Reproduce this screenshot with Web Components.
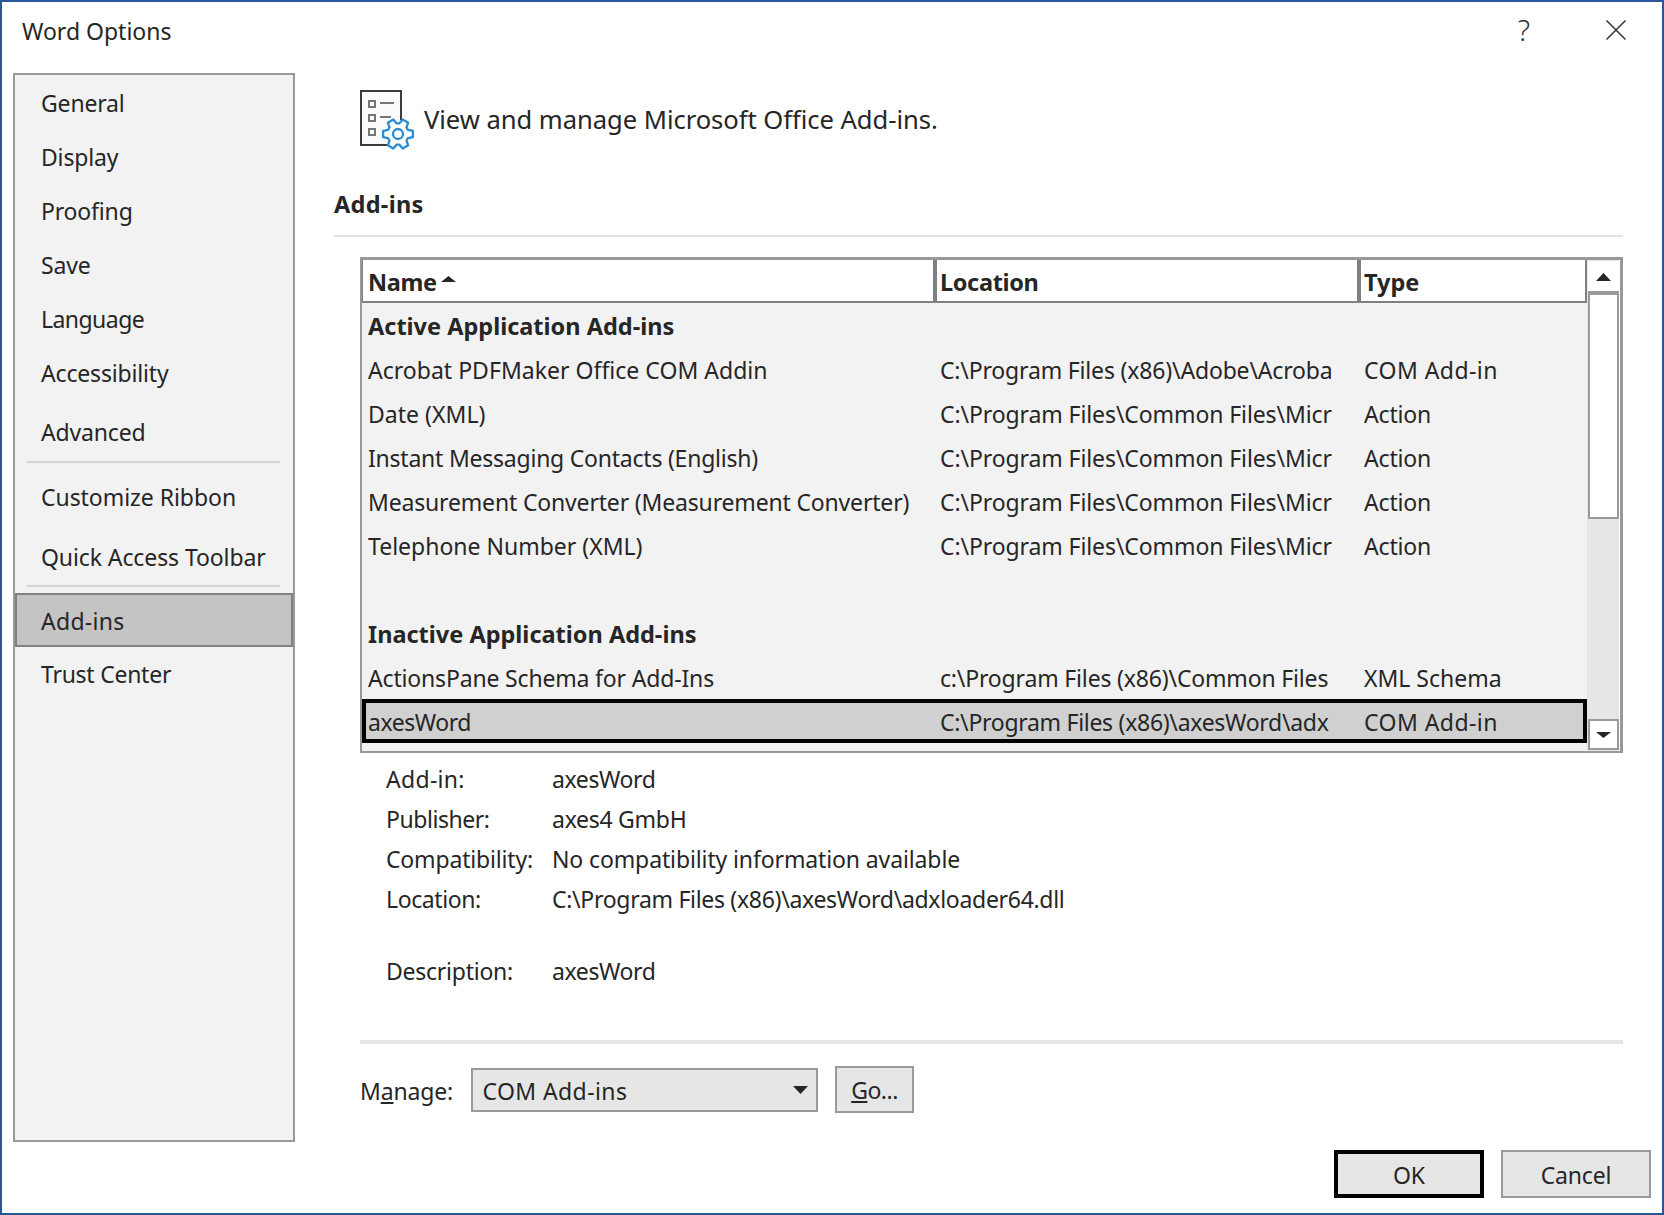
<!DOCTYPE html>
<html lang="en"><head><meta charset="utf-8"><title>Word Options</title>
<style>
html,body{margin:0;padding:0;background:#fff}
body{font-family:"Noto Sans","Open Sans",sans-serif;font-size:23px;color:#262626;letter-spacing:-.17px}
</style></head><body>
<word-options>
  <span slot="title" style="letter-spacing:0">Word Options</span>
  <side-nav slot="nav">
    <nav-item>General</nav-item><nav-item>Display</nav-item><nav-item>Proofing</nav-item><nav-item>Save</nav-item><nav-item style="letter-spacing:-.55px">Language</nav-item><nav-item>Accessibility</nav-item>
    <nav-item style="margin-top:5px">Advanced</nav-item>
    <nav-sep style="margin-top:1px"></nav-sep>
    <nav-item style="margin-top:8px;letter-spacing:-.05px">Customize Ribbon</nav-item><nav-item style="margin-top:6px;letter-spacing:-.1px">Quick Access Toolbar</nav-item>
    <nav-sep></nav-sep>
    <nav-item selected style="letter-spacing:.28px">Add-ins</nav-item><nav-item style="margin-top:1px;letter-spacing:-.25px">Trust Center</nav-item>
  </side-nav>
  <addins-pane slot="main">
    <addin-table>
      <addin-group>Active Application Add-ins</addin-group>
      <addin-row nls=".02" tls=".45" name="Acrobat PDFMaker Office COM Addin" loc="C:\Program Files (x86)\Adobe\Acroba" type="COM Add-in"></addin-row>
      <addin-row nls=".03" lls="-.1" name="Date (XML)" loc="C:\Program Files\Common Files\Micr" type="Action"></addin-row>
      <addin-row nls="-.23" lls="-.1" name="Instant Messaging Contacts (English)" loc="C:\Program Files\Common Files\Micr" type="Action"></addin-row>
      <addin-row lls="-.1" name="Measurement Converter (Measurement Converter)" loc="C:\Program Files\Common Files\Micr" type="Action"></addin-row>
      <addin-row nls="0" lls="-.1" name="Telephone Number (XML)" loc="C:\Program Files\Common Files\Micr" type="Action"></addin-row>
      <addin-group></addin-group>
      <addin-group>Inactive Application Add-ins</addin-group>
      <addin-row tls="0" name="ActionsPane Schema for Add-Ins" loc="c:\Program Files (x86)\Common Files" type="XML Schema"></addin-row>
      <addin-row selected nls="-.45" lls="-.29" tls=".45" name="axesWord" loc="C:\Program Files (x86)\axesWord\adx" type="COM Add-in"></addin-row>
    </addin-table>
    <detail-row label="Add-in:" lls=".3"><span style="letter-spacing:-.4px">axesWord</span></detail-row>
    <detail-row label="Publisher:" lls="-.45"><span style="letter-spacing:-.27px">axes4 GmbH</span></detail-row>
    <detail-row label="Compatibility:"><span style="letter-spacing:-.12px">No compatibility information available</span></detail-row>
    <detail-row label="Location:" lls="-.4"><span style="letter-spacing:-.3px">C:\Program Files (x86)\axesWord\adxloader64.dll</span></detail-row>
    <detail-row label="Description:" lls="-.25" spaced><span style="letter-spacing:-.4px">axesWord</span></detail-row>
  </addins-pane>
  <dlg-button slot="footer" default>OK</dlg-button>
  <dlg-button slot="footer">Cancel</dlg-button>
</word-options>
<script>
function def(name, css, html){
  customElements.define(name, class extends HTMLElement{
    constructor(){super();this.attachShadow({mode:'open'}).innerHTML='<style>'+css+'</style>'+(typeof html==='function'?html(this):html);}
  });
}
const tri=(w,h,up,fill='#262626')=>`<svg width="${w}" height="${h}" viewBox="0 0 ${w} ${h}" style="display:block"><polygon points="${up?`0,${h} ${w},${h} ${w/2},0`:`0,0 ${w},0 ${w/2},${h}`}" fill="${fill}"/></svg>`;
function gearPath(cx,cy,ro,ri){
  let d='';
  for(let i=0;i<6;i++){
    const a=i*60;
    const pts=[[ri,a-22],[ro,a-12],[ro,a+12],[ri,a+22]];
    pts.forEach((p,j)=>{
      const r=p[1]*Math.PI/180;
      d+=((i===0&&j===0)?'M':'L')+(cx+p[0]*Math.cos(r)).toFixed(2)+' '+(cy+p[0]*Math.sin(r)).toFixed(2);
    });
  }
  return d+'Z';
}
const ls=(h,a)=>h.hasAttribute(a)?` style="letter-spacing:${h.getAttribute(a)}px"`:'';

def('word-options',`
:host{display:grid;box-sizing:border-box;width:1664px;height:1215px;border:2px solid #2b579a;background:#fff;grid-template-rows:71px 1069px 1fr}
.title{display:flex;align-items:flex-start;padding:13px 36px 0 20px}
.t{flex:1;line-height:32px}
.help{font-size:29px;line-height:34px;font-weight:300;color:#333;margin-right:76px;margin-top:-2px}
.close{display:block;margin-top:5px}
.body{display:flex;padding-left:11px;padding-right:39px;gap:39px;min-height:0}
.foot{display:flex;justify-content:flex-end;gap:17px;padding:8px 11px 0 0;align-items:flex-start}
`,`<div class="title"><span class="t"><slot name="title"></slot></span><span class="help">?</span>
<svg class="close" width="20" height="20" viewBox="0 0 20 20"><path d="M.5.5 19.5 19.5M19.5.5.5 19.5" stroke="#333" stroke-width="1.5" fill="none"/></svg></div>
<div class="body"><slot name="nav"></slot><slot name="main"></slot></div>
<div class="foot"><slot name="footer"></slot></div>`);

def('side-nav',`:host{display:block;box-sizing:border-box;width:282px;flex:none;height:100%;background:#f2f2f2;border:2px solid #999;padding-top:2px}`,`<slot></slot>`);

def('nav-item',`
:host{display:flex;align-items:center;box-sizing:border-box;height:54px;padding-left:26px;padding-bottom:2px}
:host([selected]){background:#c4c4c4;border:2px solid #808080;padding:2px 0 0 24px;margin-top:6px;height:54px}
`,`<slot></slot>`);

def('nav-sep',`:host{display:block;height:2px;background:#d2d2d2;margin:0 13px 0 12px}`,``);

def('addins-pane',`
:host{display:block;flex:1;min-width:0;padding-top:17px}
.hero{display:flex;align-items:center;height:58px;padding-left:26px;font-size:25.6px;letter-spacing:-.05px}
.hero svg{flex:none;margin-right:8px;display:block}
h2{margin:0;font-size:23.5px;font-weight:700;letter-spacing:.3px;line-height:32px;padding-top:40px;height:87px;box-sizing:border-box}
hr.a{border:0;height:2px;background:#e3e3e3;margin:0 0 20px}
.stack{padding-left:26px}
hr.b{border:0;height:4px;background:#e6e6e6;margin:48px 0 22px 26px}
.manage{display:flex;align-items:center;height:47px;padding-left:26px}
.lab{width:111px;padding-top:3px}
.sel{box-sizing:border-box;width:347px;height:44px;border:2px solid #999;background:#e6e6e6;display:flex;align-items:center;justify-content:space-between;padding:0 8px 0 9.5px}
.sel span{padding-top:2px;letter-spacing:.4px}
.go{box-sizing:border-box;width:79px;height:47px;margin-left:17px;border:2px solid #999;background:#e6e6e6;display:flex;align-items:center;justify-content:center;padding-top:1px;letter-spacing:-.5px}
`,`<div class="hero"><svg width="56" height="60" viewBox="0 0 56 60" style="margin-bottom:-2px">
<path d="M41 30V1H1v54h30" fill="#fbfbfb" stroke="#3b3b3b" stroke-width="2"/>
<g fill="none" stroke="#767676" stroke-width="2"><rect x="9" y="11" width="6" height="6"/><rect x="9" y="25" width="6" height="6"/><rect x="9" y="39" width="6" height="6"/><path d="M20 13h14M20 27h11"/></g>
<path fill="#fff" stroke="#2a8dd4" stroke-width="2.3" stroke-linejoin="round" d="${gearPath(38,44,15.2,10.8)}"/>
<circle cx="38" cy="44" r="5" fill="none" stroke="#2a8dd4" stroke-width="2.3"/></svg>
<span>View and manage Microsoft Office Add-ins.</span></div>
<h2>Add-ins</h2><hr class="a">
<div class="stack"><slot></slot></div>
<hr class="b">
<div class="manage"><span class="lab">M<u>a</u>nage:</span><div class="sel"><span>COM Add-ins</span>${tri(15,8,false)}</div><div class="go"><span><u>G</u>o...</span></div></div>`);

def('addin-table',`
:host{display:grid;grid-template-columns:1fr 33px;box-sizing:border-box;height:496px;border:solid #999;border-width:3px 3px 2px 2px;background:#f2f2f2;grid-template-rows:1fr}
.left{display:flex;flex-direction:column;min-width:0}
.head{display:grid;grid-template-columns:570px 424px 1fr;height:43px;box-sizing:border-box;background:#fff;border:solid #808080;border-width:0 2px 2px 1px;font-weight:700;font-size:23.5px;letter-spacing:0}
.head div{display:flex;align-items:center;gap:4px;padding:3px 0 0 5px}
.head div+div{border-left:4px solid #808080;padding-left:3px}
.bar{display:flex;flex-direction:column;background:#e6e6e6;padding:1px;box-shadow:inset -1px 0 0 #fff}
.btn{box-sizing:border-box;height:31px;background:#fff;display:flex;align-items:center;justify-content:center;border:2px solid #fff}
.btn.dn{border-color:#999;margin-top:auto}
.thumb{box-sizing:border-box;height:228px;background:#fff;border:solid #999;border-width:4px 2px 2px 2px;margin-top:-1px}
`,`<div class="left"><div class="head"><div style="letter-spacing:-.4px">Name <span style="margin-bottom:7px">${tri(15,6,true)}</span></div><div style="letter-spacing:-.35px">Location</div><div>Type</div></div><slot></slot></div>
<div class="bar"><div class="btn">${tri(15,8,true)}</div><div class="thumb"></div><div class="btn dn">${tri(15,6,false)}</div></div>`);

def('addin-group',`:host{display:flex;align-items:center;height:44px;box-sizing:border-box;padding:1px 0 0 6px;font-weight:700;font-size:23.5px;letter-spacing:0}`,`<slot></slot>`);

def('addin-row',`
:host{display:grid;grid-template-columns:572px 424px 1fr;align-items:center;height:44px;box-sizing:border-box;padding:1px 0 0 6px}
:host([selected]){background:#d0d0d0;box-shadow:inset 0 0 0 4px #000}
span{white-space:nowrap;overflow:hidden}
`,h=>`<span${ls(h,'nls')}>${h.getAttribute('name')}</span><span${ls(h,'lls')}>${h.getAttribute('loc')}</span><span${ls(h,'tls')}>${h.getAttribute('type')}</span>`);

def('detail-row',`
:host{display:flex;align-items:center;height:40px;padding-left:26px;box-sizing:border-box;padding-bottom:2px}
:host([spaced]){margin-top:32px}
:host(:first-of-type){margin-top:7px}
b{font-weight:400;width:166px;flex:none}
`,h=>`<b${ls(h,'lls')}>${h.getAttribute('label')}</b><slot></slot>`);

def('dlg-button',`
:host{display:flex;align-items:center;justify-content:center;box-sizing:border-box;width:150px;height:48px;background:#e6e6e6;border:2px solid #999;padding-top:2px}
:host([default]){border:4px solid #000}
`,`<slot></slot>`);
</script>
</body></html>
